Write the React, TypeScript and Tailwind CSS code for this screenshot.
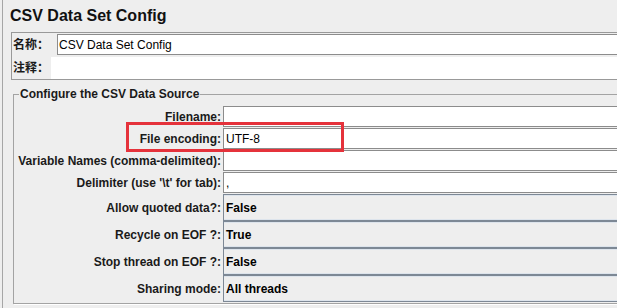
const textRows = [
  { label: "Filename:", value: "" },
  { label: "File encoding:", value: "UTF-8" },
  { label: "Variable Names (comma-delimited):", value: "" },
  { label: "Delimiter (use '\\t' for tab):", value: "," },
];

const comboRows = [
  { label: "Allow quoted data?:", value: "False" },
  { label: "Recycle on EOF ?:", value: "True" },
  { label: "Stop thread on EOF ?:", value: "False" },
  { label: "Sharing mode:", value: "All threads" },
];

export default function App() {
  return (
    <div className="relative h-[308px] w-[617px] overflow-hidden bg-[#eeeeee] font-[family-name:'Liberation_Sans','Noto_Sans_CJK_SC',sans-serif] text-[12px] text-[#1a1a1a]">
      <div className="ml-[2px] h-full w-[700px] border-l border-[#a6a6a6]">
        {/* title */}
        <div className="flex h-[32px] items-center pl-[7px] text-[16px] leading-[16px] font-bold text-[#111]">
          CSV Data Set Config
        </div>

        {/* name / comment */}
        <div className="ml-[8px] border-y border-l border-[#999999] pt-[1px]">
          <div className="flex h-[21px] items-center">
            <div className="w-[45px] pl-[1px] font-bold leading-[14px]">名称：</div>
            <div className="flex h-full flex-1 items-center border border-[#8c8c8c] bg-white pl-[1px] leading-[14px] text-black">
              CSV Data Set Config
            </div>
          </div>
          <div className="mt-[2px] flex h-[22px] items-center">
            <div className="w-[39px] pl-[1px] font-bold leading-[14px]">注释：</div>
            <div className="h-full flex-1 bg-white" />
          </div>
        </div>

        {/* CSV source group */}
        <fieldset className="mt-[7px] ml-[10px] border border-[#a3a3a3] pt-[5px] pb-[1px] shadow-[1px_1px_0_#ffffff]">
          <legend className="ml-[5px] px-[1px] font-bold leading-[14px]">
            Configure the CSV Data Source
          </legend>
          {textRows.map((row) => (
            <div key={row.label} className="mb-[1px] flex h-[21px] items-center">
              <div className="w-[209px] pr-[2px] text-right font-bold leading-[14px]">
                {row.label}
              </div>
              <div className="flex h-full flex-1 items-center border border-[#8c8c8c] bg-white pl-[2px] leading-[14px] text-black">
                {row.value}
              </div>
            </div>
          ))}
          {comboRows.map((row) => (
            <div key={row.label} className="flex h-[27px] items-center">
              <div className="w-[209px] pr-[2px] text-right font-bold leading-[14px]">
                {row.label}
              </div>
              <div className="flex h-full flex-1 items-center border border-[#7d8895] bg-[#eeeeee] pl-[2px] leading-[14px] font-bold text-black shadow-[inset_0_1px_0_#dde4ec,inset_0_-1px_0_#dde4ec]">
                {row.value}
              </div>
            </div>
          ))}
        </fieldset>
      </div>

      {/* highlight annotation */}
      <div className="absolute top-[122px] left-[126px] h-[30px] w-[218px] border-[3px] border-[#e5323b]" />
    </div>
  );
}
